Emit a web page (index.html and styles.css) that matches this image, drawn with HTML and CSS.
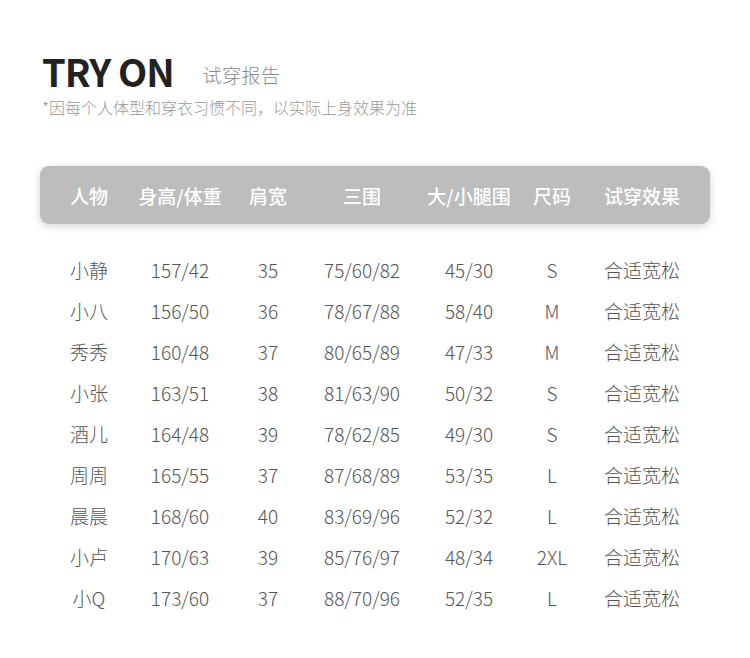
FILE: index.html
```html
<!DOCTYPE html>
<html lang="zh">
<head>
<meta charset="utf-8">
<link rel="stylesheet" href="styles.css">
</head>
<body>
<div class="page">
  <div class="title-row">
    <h1 class="title">TRY ON</h1>
    <span class="title-cn">试穿报告</span>
  </div>
  <p class="note">*因每个人体型和穿衣习惯不同，以实际上身效果为准</p>
  <div class="table">
    <div class="head row">
      <span>人物</span><span>身高/体重</span><span>肩宽</span><span>三围</span><span>大/小腿围</span><span>尺码</span><span>试穿效果</span>
    </div>
    <div class="body">
      <div class="row"><span>小静</span><span>157/42</span><span>35</span><span>75/60/82</span><span>45/30</span><span>S</span><span>合适宽松</span></div>
      <div class="row"><span>小八</span><span>156/50</span><span>36</span><span>78/67/88</span><span>58/40</span><span>M</span><span>合适宽松</span></div>
      <div class="row"><span>秀秀</span><span>160/48</span><span>37</span><span>80/65/89</span><span>47/33</span><span>M</span><span>合适宽松</span></div>
      <div class="row"><span>小张</span><span>163/51</span><span>38</span><span>81/63/90</span><span>50/32</span><span>S</span><span>合适宽松</span></div>
      <div class="row"><span>酒儿</span><span>164/48</span><span>39</span><span>78/62/85</span><span>49/30</span><span>S</span><span>合适宽松</span></div>
      <div class="row"><span>周周</span><span>165/55</span><span>37</span><span>87/68/89</span><span>53/35</span><span>L</span><span>合适宽松</span></div>
      <div class="row"><span>晨晨</span><span>168/60</span><span>40</span><span>83/69/96</span><span>52/32</span><span>L</span><span>合适宽松</span></div>
      <div class="row"><span>小卢</span><span>170/63</span><span>39</span><span>85/76/97</span><span>48/34</span><span>2XL</span><span>合适宽松</span></div>
      <div class="row"><span>小Q</span><span>173/60</span><span>37</span><span>88/70/96</span><span>52/35</span><span>L</span><span>合适宽松</span></div>
    </div>
  </div>
</div>
</body>
</html>
```
FILE: styles.css
```css
* { box-sizing: border-box; }
html, body { margin: 0; padding: 0; background: #fff; }
body {
  font-family: "Noto Sans CJK SC", "Noto Sans", sans-serif;
  width: 750px;
  height: 658px;
  overflow: hidden;
}
.page {
  padding: 48px 40px 0 40px;
}
.title-row {
  display: flex;
  align-items: center;
  padding-left: 2px;
}
.title {
  margin: 0;
  font-size: 38px;
  line-height: 46px;
  font-weight: 700;
  color: #222;
  letter-spacing: -1px;
}
.title-cn {
  margin-left: 29px;
  padding-top: 6px;
  font-size: 19px;
  color: #8a8a8a;
  font-weight: 300;
  letter-spacing: 0.5px;
}
.note {
  margin: 2px 0 0 2px;
  font-size: 16px;
  line-height: 22px;
  color: #9a9a9a;
  font-weight: 300;
}
.table {
  margin-top: 48px;
}
.row {
  display: grid;
  grid-template-columns: 98px 84px 92px 96px 118px 48px 132px;
  align-items: center;
}
.row span {
  text-align: center;
  white-space: nowrap;
}
.head {
  height: 58px;
  width: 670px;
  background: #bdbdbd;
  border-radius: 9px;
  box-shadow: 0 2px 8px rgba(0,0,0,0.18);
  color: #fff;
  font-size: 19px;
  font-weight: 500;
}
.body {
  margin-top: 25px;
}
.body .row {
  height: 41px;
  color: #555;
  font-size: 19px;
  font-weight: 300;
}
```
